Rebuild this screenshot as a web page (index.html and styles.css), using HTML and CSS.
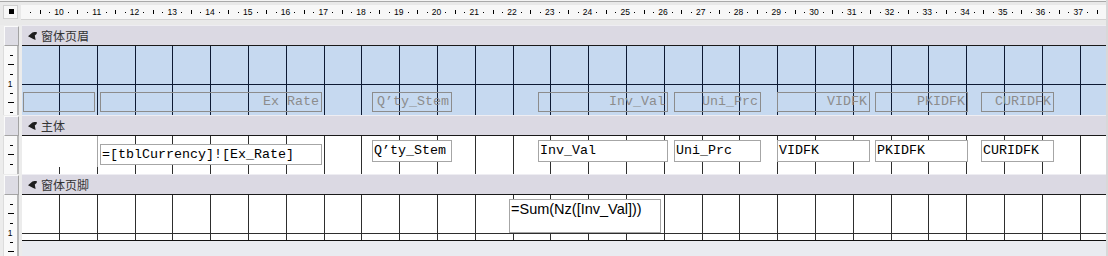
FILE: index.html
```html
<!DOCTYPE html>
<html lang="zh-CN">
<head>
    <meta charset="UTF-8">
    <meta name="viewport" content="width=device-width, initial-scale=1.0">
    <title>窗体设计视图</title>
    <link rel="stylesheet" href="styles.css">
</head>
<body>
    <div class="designer">
        <div class="row top">
            <div class="corner"><span class="corner-mark"></span></div>
            <div class="hruler" id="hruler"></div>
        </div>

        <div class="row bar-row">
            <div class="side"><span class="selector"></span></div>
            <div class="bar">
                <svg class="bar-icon" viewBox="0 0 9 8" width="9" height="8"><path d="M0 4.3 L4.4 0.6 Q6.6 -0.5 9 0.3 L8.6 2 L6.8 3.4 L7.6 8 L5.2 6.9 Z"/></svg>
                <span>窗体页眉</span>
            </div>
        </div>

        <div class="row header-row">
            <div class="side">
                <div class="vr">
                    <span class="vm"><i class="s"></i></span>
                    <span class="vm"><i class="l"></i></span>
                    <span class="vm"><i class="s"></i></span>
                    <span class="vm n">1</span>
                    <span class="vm"><i class="s"></i></span>
                    <span class="vm"><i class="l"></i></span>
                    <span class="vm"><i class="s"></i></span>
                </div>
            </div>
            <div class="section header">
                <div class="grid"></div>
                <div class="ctl lbl col-a"></div>
                <div class="ctl lbl col-b">Ex Rate</div>
                <div class="ctl lbl col-c">Q’ty_Stem</div>
                <div class="ctl lbl col-d">Inv_Val</div>
                <div class="ctl lbl col-e">Uni_Prc</div>
                <div class="ctl lbl col-f">VIDFK</div>
                <div class="ctl lbl col-g">PKIDFK</div>
                <div class="ctl lbl col-h">CURIDFK</div>
            </div>
        </div>

        <div class="row bar-row">
            <div class="side"><span class="selector"></span></div>
            <div class="bar">
                <svg class="bar-icon" viewBox="0 0 9 8" width="9" height="8"><path d="M0 4.3 L4.4 0.6 Q6.6 -0.5 9 0.3 L8.6 2 L6.8 3.4 L7.6 8 L5.2 6.9 Z"/></svg>
                <span>主体</span>
            </div>
        </div>

        <div class="row detail-row">
            <div class="side">
                <div class="vr">
                    <span class="vm"><i class="s"></i></span>
                    <span class="vm"><i class="l"></i></span>
                    <span class="vm"><i class="s"></i></span>
                </div>
            </div>
            <div class="section detail">
                <div class="grid"></div>
                <div class="ctl cover"></div>
                <div class="ctl txt col-b">=[tblCurrency]![Ex_Rate]</div>
                <div class="ctl txt col-c">Q’ty_Stem</div>
                <div class="ctl txt col-d">Inv_Val</div>
                <div class="ctl txt col-e">Uni_Prc</div>
                <div class="ctl txt col-f">VIDFK</div>
                <div class="ctl txt col-g">PKIDFK</div>
                <div class="ctl txt col-h">CURIDFK</div>
            </div>
        </div>

        <div class="row bar-row">
            <div class="side"><span class="selector"></span></div>
            <div class="bar">
                <svg class="bar-icon" viewBox="0 0 9 8" width="9" height="8"><path d="M0 4.3 L4.4 0.6 Q6.6 -0.5 9 0.3 L8.6 2 L6.8 3.4 L7.6 8 L5.2 6.9 Z"/></svg>
                <span>窗体页脚</span>
            </div>
        </div>

        <div class="row foot-row">
            <div class="side">
                <div class="vr">
                    <span class="vm"><i class="s"></i></span>
                    <span class="vm"><i class="l"></i></span>
                    <span class="vm"><i class="s"></i></span>
                    <span class="vm n">1</span>
                    <span class="vm"><i class="s"></i></span>
                    <span class="vm"><i class="l"></i></span>
                </div>
            </div>
            <div class="foot-col">
                <div class="section footer">
                    <div class="grid"></div>
                    <div class="ctl sum">=Sum(Nz([Inv_Val]))</div>
                </div>
                <div class="blank"></div>
            </div>
        </div>
    </div>

    <script>
        // top ruler: dot, tick, dot between the centimetre numbers
        const ruler = document.getElementById('hruler');
        const between = '<span class="rt"><i class="dot"></i></span>'
            + '<span class="rt"><i class="tick"></i></span>'
            + '<span class="rt"><i class="dot"></i></span>';
        let marks = '';
        for (let cm = 10; cm <= 37; cm++) {
            marks += between + `<span class="rt num">${cm}</span>`;
        }
        ruler.innerHTML = marks + between;

        // one grid line per centimetre in every section
        document.querySelectorAll('.grid').forEach(grid => {
            grid.innerHTML = '<span class="cm"></span>'.repeat(28);
        });
    </script>
</body>
</html>
```

FILE: styles.css
```css
body {
    margin: 0;
    background: #d8d8d8;
    font-family: "Liberation Sans", Arial, sans-serif;
    overflow: hidden;
}
.designer {
    width: 1106px;
    height: 256px;
    display: flex;
    flex-direction: column;
    overflow: hidden;
    background: #ececec;
}
.row {
    display: flex;
    flex: none;
    overflow: hidden;
}
.top {
    height: 25px;
    box-sizing: border-box;
    padding: 5px 0 0 3px;
    background: linear-gradient(to bottom, #f4f4f4 0 1px, #a9a9a9 1px 2px, #e9e9e9 2px);
}
.bar-row { height: 21px; }
.header-row { height: 69px; }
.detail-row { height: 38px; }
.foot-row {
    flex: 1;
    min-height: 0;
}
.corner {
    width: 15px;
    height: 14px;
    box-sizing: border-box;
    margin-right: 3px;
    padding: 3px 0 0 5px;
    background: #f7f7f7;
    border: 1px solid #d0d0d0;
}
.corner-mark {
    display: block;
    width: 5px;
    height: 5px;
    background: #000;
}
.hruler {
    flex: 1;
    height: 14px;
    display: flex;
    align-items: center;
    padding-left: 5px;
    overflow: hidden;
    background: #f7f7f7;
    border-bottom: 1px solid #d2d2d2;
}
.rt {
    flex: none;
    width: 9.45px;
    height: 14px;
    display: flex;
    align-items: center;
    justify-content: center;
}
.dot {
    width: 1px;
    height: 1px;
    background: #000;
}
.tick {
    width: 1px;
    height: 4px;
    background: #000;
}
.num {
    font-size: 8.5px;
    line-height: 14px;
    color: #000;
}

/* left gutter with vertical ruler */
.side {
    width: 22px;
    flex: none;
    box-sizing: border-box;
    padding-left: 3px;
    overflow: hidden;
}
.vr {
    width: 16px;
    height: 100%;
    box-sizing: border-box;
    padding: 4.725px 0 0 1px;
    display: flex;
    flex-direction: column;
    align-items: center;
    overflow: hidden;
    background: #f9f9f9;
    border-left: 1px solid #dcdcdc;
    border-right: 2px solid #b7b7b7;
}
.vm {
    flex: none;
    height: 9.45px;
    display: flex;
    align-items: center;
    justify-content: center;
}
.vm .s {
    width: 3px;
    height: 1px;
    background: #000;
}
.vm .l {
    width: 6px;
    height: 1px;
    background: #000;
}
.vm.n {
    font-size: 8.5px;
    color: #000;
    margin-right: 2px;
}
.selector {
    display: block;
    width: 15px;
    height: 20px;
    box-sizing: border-box;
    margin: 1px 0 0 1px;
    background: #dddce4;
    border: 1px solid;
    border-color: #fafafa #a3a3a3 #a3a3a3 #fafafa;
}

/* section bars */
.bar {
    flex: 1;
    height: 21px;
    box-sizing: border-box;
    display: flex;
    align-items: center;
    gap: 4px;
    padding-left: 6px;
    background: #dbd9e3;
    border-top: 1px solid #eeedf2;
    border-bottom: 1px solid #1a1a1a;
    font-family: "Noto Sans CJK SC", sans-serif;
    font-size: 12px;
    color: #333;
}
.bar-icon {
    fill: #1e1e1e;
}

/* sections */
.section {
    flex: 1;
    position: relative;
    overflow: hidden;
}
.header {
    height: 69px;
    background: linear-gradient(#0d1a33, #0d1a33) 0 38px / 100% 1px no-repeat, #c6d9f0;
}
.header .cm {
    border-color: #0d1a33;
}
.detail {
    height: 38px;
    background: #fff;
}
.foot-col {
    flex: 1;
    display: flex;
    flex-direction: column;
}
.footer {
    flex: none;
    height: 46px;
    box-sizing: border-box;
    border-bottom: 1px solid #111;
    background: linear-gradient(#2e2e2e, #2e2e2e) 0 38px / 100% 1px no-repeat, #fff;
}
.blank {
    flex: 1;
    background: #e9ebf0;
}
.grid {
    display: flex;
    height: 100%;
    margin-left: 37px;
}
.cm {
    flex: none;
    width: 37.8px;
    height: 100%;
    box-sizing: border-box;
    border-left: 1px solid #2e2e2e;
}

/* controls on the design canvas */
.ctl {
    position: absolute;
    box-sizing: border-box;
    overflow: hidden;
    white-space: nowrap;
    font-family: "Liberation Mono", monospace;
    font-size: 13.33px;
    line-height: 18px;
}
.lbl {
    top: 46px;
    height: 20px;
    padding-right: 2px;
    text-align: right;
    color: #8c8c8c;
    border: 1px solid #8c8c8c;
}
.txt {
    top: 4px;
    height: 22px;
    padding: 1px 0 0 1px;
    color: #000;
    background: #fff;
    border: 1px solid #a6a6a6;
}
.txt.col-b {
    top: 8px;
    height: 21px;
}
.cover {
    left: 0;
    top: 0;
    width: 76px;
    height: 31px;
    background: #fff;
    border-right: 1px solid #a6a6a6;
}
.sum {
    left: 487px;
    top: 4px;
    width: 152px;
    height: 34px;
    padding: 1px 0 0 1px;
    font-family: "Liberation Sans", Arial, sans-serif;
    font-size: 14.5px;
    line-height: 17px;
    color: #000;
    background: #fff;
    border: 1px solid #a6a6a6;
}
.col-a { left: 1px; width: 72px; }
.col-b { left: 78px; width: 222px; }
.col-c { left: 350px; width: 80px; }
.col-d { left: 516px; width: 130px; }
.col-e { left: 652px; width: 87px; }
.col-f { left: 755px; width: 93px; }
.col-g { left: 853px; width: 93px; }
.col-h { left: 959px; width: 73px; }
```
